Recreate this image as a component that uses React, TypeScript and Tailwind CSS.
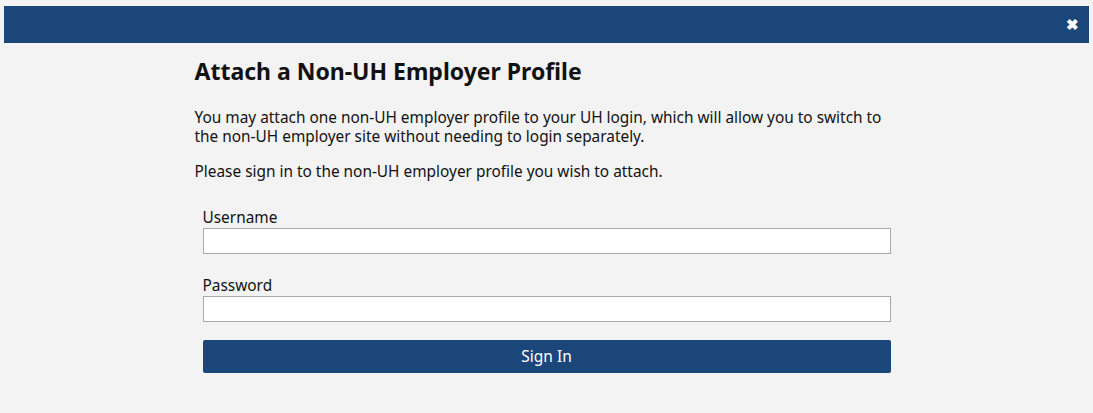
import React from "react";

const App = () => {
  return (
    <div className="min-h-[413px] bg-[#f3f3f3] pt-[6px] font-['Noto_Sans',sans-serif] text-[#111]">
      <div className="mx-[4px] h-[37px] bg-[#1b467a] flex items-center justify-end pr-[10px]">
        <span className="text-white text-[15px] font-bold leading-none">&#x2716;</span>
      </div>
      <div className="mx-auto w-[704px]">
        <h1 className="mt-[13px] text-[23px] font-bold leading-[30px]">Attach a Non-UH Employer Profile</h1>
        <p className="mt-[22px] text-[15.4px] leading-[19px] pr-[10px]">
          You may attach one non-UH employer profile to your UH login, which will allow you to switch to the non-UH employer site without needing to login separately.
        </p>
        <p className="mt-[16px] text-[15.4px] leading-[19px]">
          Please sign in to the non-UH employer profile you wish to attach.
        </p>
        <form className="px-[8px] mt-[27px]" onSubmit={(e) => e.preventDefault()}>
          <label className="block text-[15.4px] leading-[20px]">Username</label>
          <input type="text" className="block w-full h-[26px] bg-white border border-[#a9a9a9]" />
          <label className="block mt-[22px] text-[15.4px] leading-[20px]">Password</label>
          <input type="password" className="block w-full h-[26px] bg-white border border-[#a9a9a9]" />
          <button type="submit" className="mt-[18px] w-full h-[33px] bg-[#1b467a] text-white text-[15.5px] rounded-[2px]">
            Sign In
          </button>
        </form>
      </div>
    </div>
  );
};

export default App;
